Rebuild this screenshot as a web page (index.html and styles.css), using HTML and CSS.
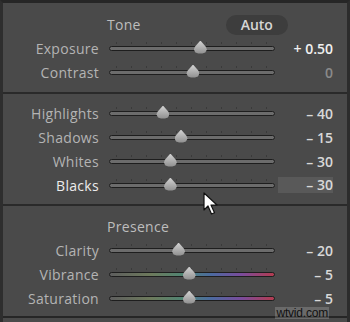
FILE: index.html
```html
<!DOCTYPE html>
<html lang="en">
<head>
    <meta charset="UTF-8">
    <title>Basic - Tone</title>
    <link rel="stylesheet" href="styles.css">
</head>
<body>

    <div class="panel">
        <div class="section">
            <div class="section-head">
                <span class="head-title">Tone</span>
                <span class="auto-btn">Auto</span>
            </div>
            <div class="row">
                <span class="label">Exposure</span>
                <div class="track"><span class="thumb" style="left: 54.8%"></span></div>
                <span class="value bright">+ 0.50</span>
            </div>
            <div class="row">
                <span class="label">Contrast</span>
                <div class="track"><span class="thumb" style="left: 50.3%"></span></div>
                <span class="value dim">0</span>
            </div>
        </div>

        <div class="section mid">
            <div class="row">
                <span class="label">Highlights</span>
                <div class="track"><span class="thumb" style="left: 32%"></span></div>
                <span class="value">– 40</span>
            </div>
            <div class="row">
                <span class="label">Shadows</span>
                <div class="track"><span class="thumb" style="left: 43%"></span></div>
                <span class="value">– 15</span>
            </div>
            <div class="row">
                <span class="label">Whites</span>
                <div class="track"><span class="thumb" style="left: 36.5%"></span></div>
                <span class="value">– 30</span>
            </div>
            <div class="row active">
                <span class="label">Blacks</span>
                <div class="track"><span class="thumb" style="left: 36.5%"></span></div>
                <span class="value">– 30</span>
            </div>
        </div>

        <div class="section last">
            <div class="section-head">
                <span class="head-title">Presence</span>
            </div>
            <div class="row">
                <span class="label">Clarity</span>
                <div class="track"><span class="thumb" style="left: 41.5%"></span></div>
                <span class="value">– 20</span>
            </div>
            <div class="row">
                <span class="label">Vibrance</span>
                <div class="track color"><span class="thumb" style="left: 48%"></span></div>
                <span class="value">– 5</span>
            </div>
            <div class="row">
                <span class="label">Saturation</span>
                <div class="track color"><span class="thumb" style="left: 48%"></span></div>
                <span class="value">– 5</span>
            </div>
        </div>

        <!-- mouse pointer over the panel -->
        <svg class="cursor" width="16" height="24" viewBox="0 0 16 24">
            <path d="M1 1 L1 18 L5 14 L8.5 22 L11.5 20.7 L8 13 L14 13 Z" fill="#fff" stroke="#111" stroke-width="1.2" stroke-linejoin="round"/>
        </svg>

        <span class="watermark">wtvid.com</span>
    </div>

</body>
</html>
```

FILE: styles.css
```css
html, body {
    margin: 0;
    padding: 0;
    background-color: #3c3c3c;
    font-family: 'Open Sans', 'Liberation Sans', sans-serif;
    font-size: 14px;
}
.panel {
    position: relative;
    width: 350px;
    height: 322px;
    box-sizing: border-box;
    background-color: #4a4a4a;
    border-top: 3px solid #262626;
    border-left: 3px solid #2e2e2e;
    border-right: 3px solid #2c2c2c;
    overflow: hidden;
}
.section {
    padding: 10px 0 8px 0;
    border-bottom: 2px solid #2a2a2a;
}
.section.mid {
    padding: 7px 0 7px 0;
}
.section.last {
    padding: 9px 0 6px 0;
    border-bottom: 2px solid #262626;
}
.section-head {
    height: 23px;
    display: flex;
    align-items: center;
    padding-left: 104px;
}
.head-title {
    color: #bdbdbd;
    letter-spacing: 0.3px;
}
.auto-btn {
    margin-left: 85px;
    width: 62px;
    height: 20px;
    line-height: 20px;
    text-align: center;
    border-radius: 10px;
    background-color: #3d3d3d;
    color: #d6d6d6;
    font-weight: 600;
}
.row {
    height: 24px;
    display: flex;
    align-items: center;
}
.label {
    width: 96px;
    text-align: right;
    color: #b4b4b4;
    letter-spacing: 0.3px;
}
.row.active .label {
    color: #ececec;
}
.track {
    position: relative;
    margin-left: 10px;
    width: 164px;
    height: 3px;
    border: 1px solid #1e1e1e;
    border-radius: 3px;
    background-color: #6c6c6c;
}
.track::before {
    content: '';
    position: absolute;
    left: 6px;
    right: 4px;
    top: -5px;
    height: 2px;
    background: repeating-linear-gradient(to right, #3a3a3a 0, #3a3a3a 1px, transparent 1px, transparent 15px);
}
.track.color {
    background: linear-gradient(to right, #5e5e5e, #6d7a5c 25%, #4f8574 45%, #4c6aa0 62%, #7a4c9c 80%, #b33c50);
}
.thumb {
    position: absolute;
    top: -6px;
    width: 13px;
    height: 13px;
    margin-left: -6px;
    background: linear-gradient(#d2d2d2, #8e8e8e);
    clip-path: polygon(50% 0, 92% 48%, 100% 70%, 88% 92%, 65% 100%, 35% 100%, 12% 92%, 0 70%, 8% 48%);
}
.value {
    width: 58px;
    text-align: right;
    color: #d8d8d8;
    font-weight: 600;
}
.value.bright {
    color: #f0f0f0;
}
.value.dim {
    color: #8a8a8a;
}
.row.active .value {
    background-color: #595959;
    height: 16px;
    line-height: 16px;
    margin-left: 3px;
    width: 55px;
}
.cursor {
    position: absolute;
    left: 200px;
    top: 189px;
}
.watermark {
    position: absolute;
    right: 18px;
    bottom: 3px;
    font-family: 'Liberation Sans', sans-serif;
    font-size: 12px;
    line-height: 12px;
    letter-spacing: -0.2px;
    color: #111;
    background-color: rgba(255, 255, 255, 0.18);
    padding: 0 1px;
}
```
